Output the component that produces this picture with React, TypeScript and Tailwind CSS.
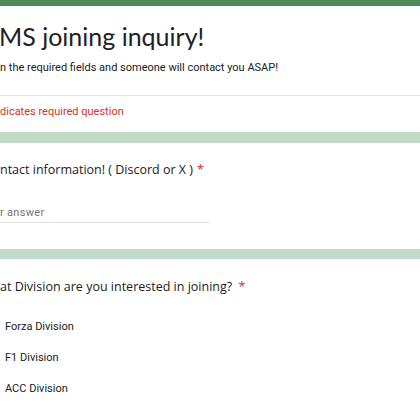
export default function App() {
  const options = ["Forza Division", "F1 Division", "ACC Division"];

  return (
    <div className="w-[420px] h-[420px] overflow-hidden bg-[#c4dac8] flex flex-col" style={{ fontFamily: "Roboto, sans-serif" }}>
      <div className="h-[6px] bg-[#4a8a58]" />

      <div className="bg-white flex flex-col">
        <div className="pt-[14px] pb-[8px]">
          <h1 className="-ml-[1px] text-[25px] leading-[32px] text-[#202124] font-['Lato',sans-serif]">
            MS joining inquiry!
          </h1>
          <p className="mt-[8px] text-[11px] leading-[16px] text-[#202124]">
            n the required fields and someone will contact you ASAP!
          </p>
        </div>
        <div className="mt-[11px] h-px bg-[#e4e4e4]" />
        <p className="pt-[8px] pb-[12px] text-[11px] leading-[16px] text-[#d93025]">
          dicates required question
        </p>
      </div>

      <div className="h-[11px]" />

      <div className="bg-white flex flex-col pt-[17px] pb-[26px]">
        <p className="text-[12.5px] leading-[20px] text-[#202124] font-['Open_Sans',sans-serif]">
          ntact information! ( Discord or X )<span className="ml-[4px] text-[#d93025]">*</span>
        </p>
        <div className="mt-[25px] w-[210px] border-b border-[#e0e0e0] pb-[1px]">
          <p className="text-[11px] leading-[16px] text-[#70757a] tracking-[0.3px]">r answer</p>
        </div>
      </div>

      <div className="h-[10px]" />

      <div className="bg-white flex flex-col pt-[18px] grow">
        <p className="text-[12.5px] leading-[20px] text-[#202124] font-['Open_Sans',sans-serif]">
          at Division are you interested in joining? <span className="ml-[3px] text-[#d93025]">*</span>
        </p>
        <div className="mt-[14px] flex flex-col">
          {options.map((o) => (
            <div key={o} className="h-[31px] flex items-center pl-[5px]">
              <span className="text-[11px] leading-[16px] text-[#202124]">{o}</span>
            </div>
          ))}
        </div>
      </div>
    </div>
  );
}
